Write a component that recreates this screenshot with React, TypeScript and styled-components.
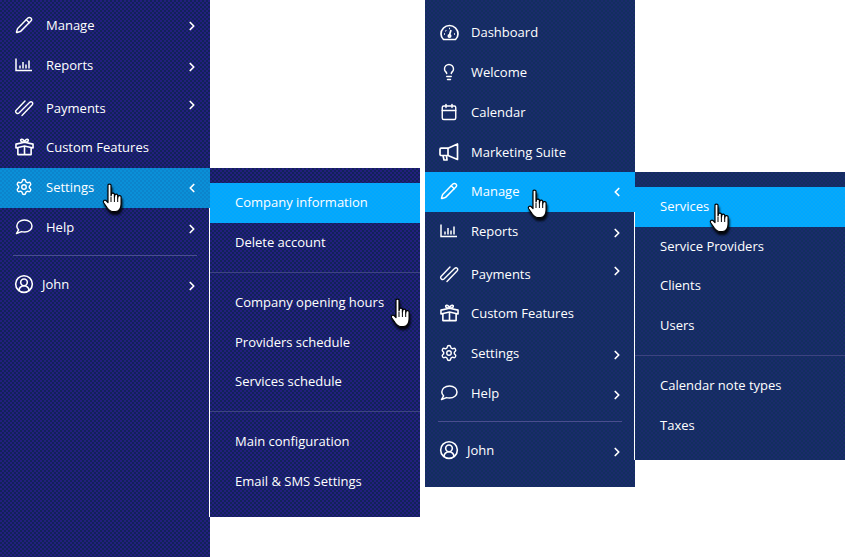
import React from 'react';
import styled, { createGlobalStyle } from 'styled-components';
import {
  Pencil,
  Settings as SettingsIcon,
  CircleUserRound,
  Lightbulb,
  Calendar,
  ChevronRight,
  ChevronLeft,
} from 'lucide-react';

const GlobalStyle = createGlobalStyle`
  html, body {
    margin: 0;
    padding: 0;
    background: #ffffff;
    font-family: "Open Sans", "Noto Sans", sans-serif;
  }
`;

// Dithered fills, the reference is a 256 colour capture
const dither = (a: string, b: string) => `
  background-color: ${a};
  background-image: repeating-conic-gradient(${a} 0 25%, ${b} 0 50%);
  background-size: 4px 4px;
`;

const panelFill = (tone: 'violet' | 'navy') =>
  tone === 'violet' ? dither('#112259', '#231f7e') : dither('#122f5e', '#1b2a6c');

const Page = styled.div`
  display: flex;
  align-items: flex-start;
  width: 858px;
  height: 557px;
  overflow: hidden;
`;

const Sidebar = styled.nav<{ $tone: 'violet' | 'navy' }>`
  width: 210px;
  flex: none;
  box-sizing: border-box;
  ${(p) => panelFill(p.$tone)}
  &.first {
    height: 557px;
    padding-top: 6px;
  }
  &.second {
    height: 487px;
    margin-left: 5px;
    padding-top: 13px;
  }
`;

const Flyout = styled.div<{ $tone: 'violet' | 'navy' }>`
  width: 211px;
  flex: none;
  box-sizing: border-box;
  margin-left: -1px;
  border-left: 1px solid #ffffff;
  ${(p) => panelFill(p.$tone)}
  &.first {
    margin-top: 168px;
    height: 349px;
    padding-top: 15px;
  }
  &.second {
    margin-top: 172px;
    height: 288px;
    padding-top: 15px;
  }
`;

const MenuRow = styled.div<{ $active?: string; $tall?: boolean }>`
  position: relative;
  display: flex;
  align-items: center;
  box-sizing: border-box;
  height: ${(p) => (p.$tall ? '42.5px' : '39.75px')};
  padding: ${(p) => (p.$tall ? '2px 11px 0 14px' : '0 11px 1px 14px')};
  color: #ffffff;
  font-size: 13px;
  font-weight: 500;
  ${(p) => p.$active && dither(p.$active, p.$active === '#0a90d8' ? '#0c84cc' : '#0aa8f8')}
`;

const IconSlot = styled.span<{ $wide?: boolean }>`
  display: flex;
  justify-content: center;
  width: 20px;
  margin-right: ${(p) => (p.$wide ? '8px' : '12px')};
`;

const Label = styled.span`
  flex: 1;
  white-space: nowrap;
`;

const Chevron = styled.span<{ $shift: number }>`
  display: flex;
  transform: translateY(${(p) => p.$shift}px);
`;

const Divider = styled.hr`
  height: 1px;
  border: 0;
  margin: 8px 13px;
  background: #4a4f8e;
`;

const SubRow = styled.div<{ $active?: string }>`
  position: relative;
  display: flex;
  align-items: center;
  box-sizing: border-box;
  height: 39.6px;
  padding: 0 0 1px 25px;
  color: #ffffff;
  font-size: 13px;
  font-weight: 500;
  white-space: nowrap;
  ${(p) => p.$active && dither(p.$active, '#0aa8f8')}
`;

const SubDivider = styled.hr`
  height: 1px;
  border: 0;
  margin: 9.5px 0 10px;
  background: #3d4480;
`;

const HandWrap = styled.span<{ $left: number; $top: number }>`
  position: absolute;
  left: ${(p) => p.$left}px;
  top: ${(p) => p.$top}px;
  display: flex;
  filter: drop-shadow(1px 3px 1px rgba(0, 0, 0, 0.85));
`;

const Hand = ({ left, top }: { left: number; top: number }) => (
  <HandWrap $left={left} $top={top}>
    <svg width="22" height="30" viewBox="0 0 22 30">
      <path
        d="M6 2C6 .8 9 .8 9 2V13L9.5 10.8C10 9.8 12 9.8 12.4 11V14L13 11.8C13.6 10.8 15.4 11 15.7 12.2V15L16.2 13.2C16.9 12.2 18.9 12.5 19.1 13.7V21C19.1 25 17 28.5 13.5 28.5H10.5C8 28.5 6.5 26.5 5 24.5L1.5 19.5C.7 18 2.7 16.3 4 17.5L6 19.5Z"
        fill="#ffffff"
        stroke="#000000"
        strokeWidth="1.2"
        strokeLinejoin="round"
      />
      <path d="M9 14V19M12.4 14V19M15.7 15V19" stroke="#000000" strokeWidth="1" fill="none" />
    </svg>
  </HandWrap>
);

const ReportsIcon = () => (
  <svg width="18" height="16" viewBox="0 0 18 16" fill="none" stroke="#fff" strokeWidth="1.5">
    <path d="M1 1.5V13.5H17" />
    <path d="M5 11.5V8.5M8 11.5V5M11 11.5V7.5M14 11.5V3.5" />
  </svg>
);

const GaugeIcon = () => (
  <svg width="19" height="17" viewBox="0 0 19 17" fill="none" stroke="#fff" strokeWidth="1.7">
    <path d="M3.5 15.5C2 14 1 12 1 10A8.5 8.5 0 0 1 18 10C18 12 17 14 15.5 15.5Z" />
    <path d="M9.5 11L11 6" />
    <circle cx="9.5" cy="12" r="1.2" />
    <path d="M4 10H5M5.5 6.5L6.2 7M9 4.5H10M14 10H15" />
  </svg>
);

const ClipIcon = () => (
  <svg width="20" height="20" viewBox="0 0 20 20" fill="none" stroke="#fff" strokeWidth="1.4" strokeLinecap="round">
    <path d="M11 3L2.2 12.3C.6 14 3.3 16.6 5 15L15.5 4.5C17.5 2.6 19.8 5 18 7L8 17.5" />
  </svg>
);

const GiftIcon = () => (
  <svg width="19" height="18" viewBox="0 0 20 19" fill="none" stroke="#fff" strokeWidth="1.7" strokeLinejoin="round">
    <path d="M1 6.5L10 4.5L19 6.5V10.5L10 8.5L1 10.5Z" />
    <path d="M3 10.5V17.5H17V10.5M10 8.5V17.5" />
    <path d="M10 4.5C8 4.5 5.5 3.5 6 2C6.6 .5 9.5 1.5 10 4.5C10.5 1.5 13.4 .5 14 2C14.5 3.5 12 4.5 10 4.5Z" />
  </svg>
);

const HornIcon = () => (
  <svg width="20" height="18" viewBox="0 0 20 18" fill="none" stroke="#fff" strokeWidth="1.7" strokeLinejoin="round">
    <path d="M1 6.5C1 5.8 1.5 5.2 2.2 5.2H9L18.5 1V16.5L9 12.5H2.2C1.5 12.5 1 12 1 11.2Z" />
    <path d="M9 5.2V12.5M4 12.5L5 17H8L7.5 12.5" />
  </svg>
);

const BubbleIcon = () => (
  <svg width="18" height="16" viewBox="0 0 18 16" fill="none" stroke="#fff" strokeWidth="1.5" strokeLinejoin="round">
    <path d="M9.5 1C5 1 1.8 3.6 1.8 7C1.8 8.6 2.6 10 3.6 10.8L1.5 14.5L6.5 12.6C7.4 12.9 8.4 13 9.5 13C14 13 17 10.4 17 7C17 3.6 14 1 9.5 1Z" />
  </svg>
);

const Chev = ({ open, shift }: { open?: boolean; shift: number }) => (
  <Chevron $shift={shift}>
    {open ? (
      <ChevronLeft size={14} strokeWidth={3} color="#fff" />
    ) : (
      <ChevronRight size={14} strokeWidth={3} color="#fff" />
    )}
  </Chevron>
);

const iconProps = { size: 18, strokeWidth: 1.9, color: '#fff' };

const TailRows = ({ openItem, activeColor }: { openItem: string; activeColor: string }) => {
  const items = [
    { label: 'Manage', icon: <Pencil {...iconProps} />, shift: 1, more: true },
    { label: 'Reports', icon: <ReportsIcon />, shift: 2, more: true },
    { label: 'Payments', icon: <ClipIcon />, shift: -3, more: true, tall: true },
    { label: 'Custom Features', icon: <GiftIcon />, shift: 0, more: false },
    { label: 'Settings', icon: <SettingsIcon {...iconProps} />, shift: 2, more: true },
    { label: 'Help', icon: <BubbleIcon />, shift: 2, more: true },
  ];
  return (
    <>
      {items.map((it) => {
        const open = it.label === openItem;
        return (
          <MenuRow key={it.label} $active={open ? activeColor : undefined} $tall={it.tall}>
            <IconSlot>{it.icon}</IconSlot>
            <Label>{it.label}</Label>
            {it.more && <Chev open={open} shift={open ? 1 : it.shift} />}
            {open && <Hand left={102} top={openItem === 'Settings' ? 15 : 17} />}
          </MenuRow>
        );
      })}
      <Divider />
      <MenuRow>
        <IconSlot $wide>
          <CircleUserRound size={20} strokeWidth={1.9} color="#fff" />
        </IconSlot>
        <Label>John</Label>
        <Chev shift={2} />
      </MenuRow>
    </>
  );
};

const App: React.FC = () => (
  <>
    <GlobalStyle />
    <Page>
      <Sidebar $tone="violet" className="first">
        <TailRows openItem="Settings" activeColor="#0a90d8" />
      </Sidebar>

      <Flyout $tone="violet" className="first">
        <SubRow $active="#00a8ff">Company information</SubRow>
        <SubRow>Delete account</SubRow>
        <SubDivider />
        <SubRow>
          Company opening hours
          <Hand left={180} top={15} />
        </SubRow>
        <SubRow>Providers schedule</SubRow>
        <SubRow>Services schedule</SubRow>
        <SubDivider />
        <SubRow>Main configuration</SubRow>
        <SubRow>Email &amp; SMS Settings</SubRow>
      </Flyout>

      <Sidebar $tone="navy" className="second">
        <MenuRow>
          <IconSlot>
            <GaugeIcon />
          </IconSlot>
          <Label>Dashboard</Label>
        </MenuRow>
        <MenuRow>
          <IconSlot>
            <Lightbulb {...iconProps} />
          </IconSlot>
          <Label>Welcome</Label>
        </MenuRow>
        <MenuRow>
          <IconSlot>
            <Calendar {...iconProps} />
          </IconSlot>
          <Label>Calendar</Label>
        </MenuRow>
        <MenuRow>
          <IconSlot>
            <HornIcon />
          </IconSlot>
          <Label>Marketing Suite</Label>
        </MenuRow>
        <TailRows openItem="Manage" activeColor="#00a8ff" />
      </Sidebar>

      <Flyout $tone="navy" className="second">
        <SubRow $active="#00a8ff">
          Services
          <Hand left={74} top={16} />
        </SubRow>
        <SubRow>Service Providers</SubRow>
        <SubRow>Clients</SubRow>
        <SubRow>Users</SubRow>
        <SubDivider />
        <SubRow>Calendar note types</SubRow>
        <SubRow>Taxes</SubRow>
      </Flyout>
    </Page>
  </>
);

export default App;
